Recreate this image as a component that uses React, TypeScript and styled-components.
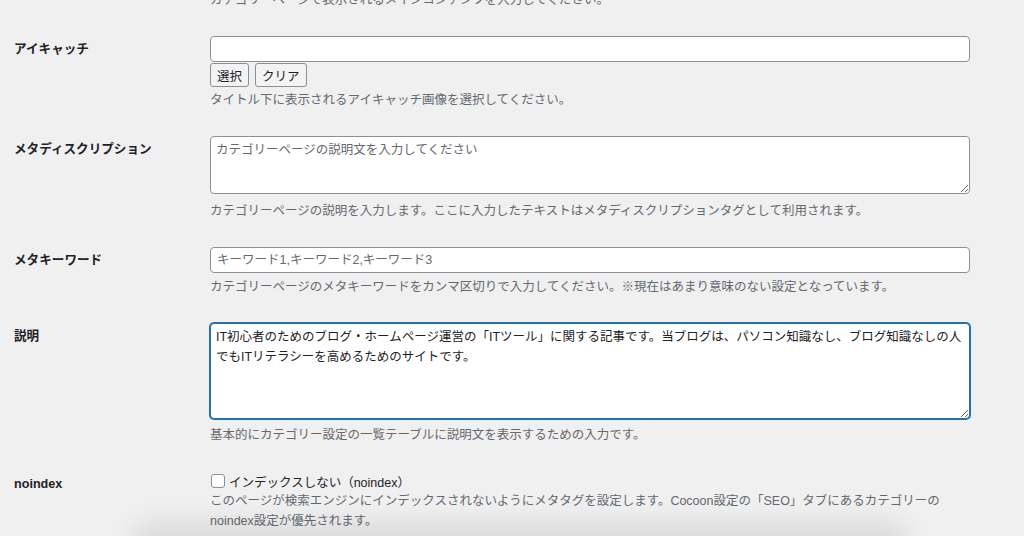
import React, {useEffect, useRef} from 'react';
import styled, {createGlobalStyle} from 'styled-components';

const GlobalStyle = createGlobalStyle`
  html, body {
    margin: 0;
    padding: 0;
    background: #f0f0f1;
    overflow: hidden;
  }
  body {
    font-family: "Liberation Sans", "Noto Sans CJK JP", sans-serif;
    color: #1d2327;
  }
`;

const Page = styled.div`
  margin-top: -23px;
  padding-left: 14px;
  width: 956px;
`;

const Row = styled.div`
  display: grid;
  grid-template-columns: 196px 760px;
  padding: 13px 0;
`;

const Label = styled.div`
  font-size: 12.6px;
  font-weight: 700;
  line-height: 26px;
  color: #1d2327;
`;

const Field = styled.div`
  display: flex;
  flex-direction: column;
  align-items: flex-start;
`;

const TextInput = styled.input`
  box-sizing: border-box;
  width: 760px;
  height: 26px;
  margin: 0;
  padding: 0 6px;
  border: 1px solid #8c8f94;
  border-radius: 4px;
  background: #fff;
  font-family: "Liberation Sans", "Noto Sans CJK JP", sans-serif;
  font-size: 12.5px;
  color: #2c3338;
  outline: none;
  &::placeholder {
    color: #646970;
    opacity: 1;
  }
`;

const TextArea = styled.textarea<{$height: number; $focused?: boolean}>`
  display: block;
  box-sizing: border-box;
  width: 760px;
  height: ${p => p.$height}px;
  margin: 0;
  padding: 3px 4px 2px 5px;
  border: 1px solid ${p => (p.$focused ? '#2271b1' : '#8c8f94')};
  border-radius: 4px;
  box-shadow: ${p => (p.$focused ? '0 0 0 1px #2271b1' : 'none')};
  background: #fff;
  font-family: "Liberation Sans", "Noto Sans CJK JP", sans-serif;
  font-size: 12.5px;
  line-height: 20px;
  color: #1d2327;
  outline: none;
  resize: vertical;
  &::placeholder {
    color: #646970;
    opacity: 1;
  }
`;

const ButtonRow = styled.div`
  display: flex;
  gap: 6px;
  margin-top: 1px;
`;

const SmallButton = styled.button`
  box-sizing: border-box;
  height: 24px;
  margin: 0;
  padding: 0 6px;
  border: 1px solid #8c8f94;
  border-radius: 3px;
  background: #f3f3f3;
  font-family: "Liberation Sans", "Noto Sans CJK JP", sans-serif;
  font-size: 12.5px;
  color: #1d2327;
  cursor: pointer;
`;

const Description = styled.p<{$gap?: number}>`
  margin: ${p => p.$gap ?? 4}px 0 0;
  font-size: 12.5px;
  line-height: 20px;
  color: #646970;
`;

const TopNote = styled(Description)`
  margin-top: 0;
`;

const CheckLine = styled.label`
  display: flex;
  align-items: center;
  gap: 4px;
  height: 20px;
  font-size: 12.5px;
  color: #1d2327;
`;

const CheckBox = styled.input`
  appearance: none;
  box-sizing: border-box;
  width: 14px;
  height: 14px;
  margin: 0 0 0 1px;
  border: 1px solid #8c8f94;
  border-radius: 3px;
  background: #fff;
`;

const BottomShade = styled.div`
  position: fixed;
  left: 150px;
  width: 740px;
  bottom: -28px;
  height: 28px;
  background: #d6d6d6;
  box-shadow: 0 0 26px 14px rgba(0, 0, 0, 0.09);
  pointer-events: none;
`;

const descriptionText =
  'IT初心者のためのブログ・ホームページ運営の「ITツール」に関する記事です。当ブログは、パソコン知識なし、ブログ知識なしの人でもITリテラシーを高めるためのサイトです。';

export default function App() {
  const areaRef = useRef<HTMLTextAreaElement>(null);

  useEffect(() => {
    const el = areaRef.current;
    if (el) {
      el.focus();
      el.setSelectionRange(el.value.length, el.value.length);
    }
  }, []);

  return (
    <>
      <GlobalStyle />
      <Page>
        <Row>
          <div />
          <Field>
            <TopNote>カテゴリーページで表示されるメインコンテンツを入力してください。</TopNote>
          </Field>
        </Row>

        <Row>
          <Label>アイキャッチ</Label>
          <Field>
            <TextInput type="text" />
            <ButtonRow>
              <SmallButton>選択</SmallButton>
              <SmallButton>クリア</SmallButton>
            </ButtonRow>
            <Description $gap={3}>タイトル下に表示されるアイキャッチ画像を選択してください。</Description>
          </Field>
        </Row>

        <Row>
          <Label>メタディスクリプション</Label>
          <Field>
            <TextArea $height={58} placeholder="カテゴリーページの説明文を入力してください" />
            <Description $gap={7}>
              カテゴリーページの説明を入力します。ここに入力したテキストはメタディスクリプションタグとして利用されます。
            </Description>
          </Field>
        </Row>

        <Row>
          <Label>メタキーワード</Label>
          <Field>
            <TextInput type="text" placeholder="キーワード1,キーワード2,キーワード3" />
            <Description>
              カテゴリーページのメタキーワードをカンマ区切りで入力してください。※現在はあまり意味のない設定となっています。
            </Description>
          </Field>
        </Row>

        <Row>
          <Label>説明</Label>
          <Field>
            <TextArea ref={areaRef} $height={96} $focused defaultValue={descriptionText} />
            <Description $gap={6}>基本的にカテゴリー設定の一覧テーブルに説明文を表示するための入力です。</Description>
          </Field>
        </Row>

        <Row>
          <Label>noindex</Label>
          <Field>
            <CheckLine>
              <CheckBox type="checkbox" />
              インデックスしない（noindex）
            </CheckLine>
            <Description $gap={0}>
              このページが検索エンジンにインデックスされないようにメタタグを設定します。Cocoon設定の「SEO」タブにあるカテゴリーのnoindex設定が優先されます。
            </Description>
          </Field>
        </Row>
      </Page>
      <BottomShade />
    </>
  );
}
